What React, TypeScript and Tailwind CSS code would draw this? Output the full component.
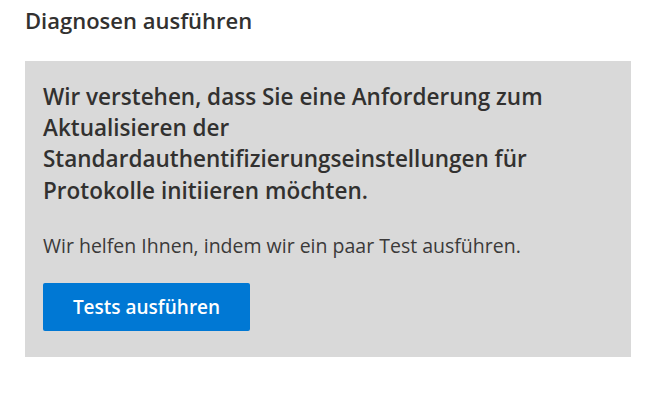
export default function App() {
  return (
    <div className="min-h-[403px] w-[647px] bg-white pl-[25px] pr-4 pt-[6px] font-['Open_Sans',sans-serif] text-[#323130]">
      <h2 className="text-[22px] font-semibold leading-[28px]">Diagnosen ausführen</h2>
      <div className="mt-[27px] w-[606px] bg-[#d9d9d9] px-[18px] pt-[19.5px] pb-[26px]">
        <p className="text-[22.5px] font-semibold leading-[31.4px]">
          Wir verstehen, dass Sie eine Anforderung zum Aktualisieren der
          Standardauthentifizierungseinstellungen für Protokolle initiieren möchten.
        </p>
        <p className="mt-[26.6px] text-[19.5px] leading-[26px] text-[#3b3a39]">
          Wir helfen Ihnen, indem wir ein paar Test ausführen.
        </p>
        <button className="mt-[24.3px] flex h-[48px] w-[207px] items-center justify-center rounded-[2px] bg-[#0078d4] text-[19px] font-semibold leading-[26px] text-white">
          Tests ausführen
        </button>
      </div>
    </div>
  );
}
